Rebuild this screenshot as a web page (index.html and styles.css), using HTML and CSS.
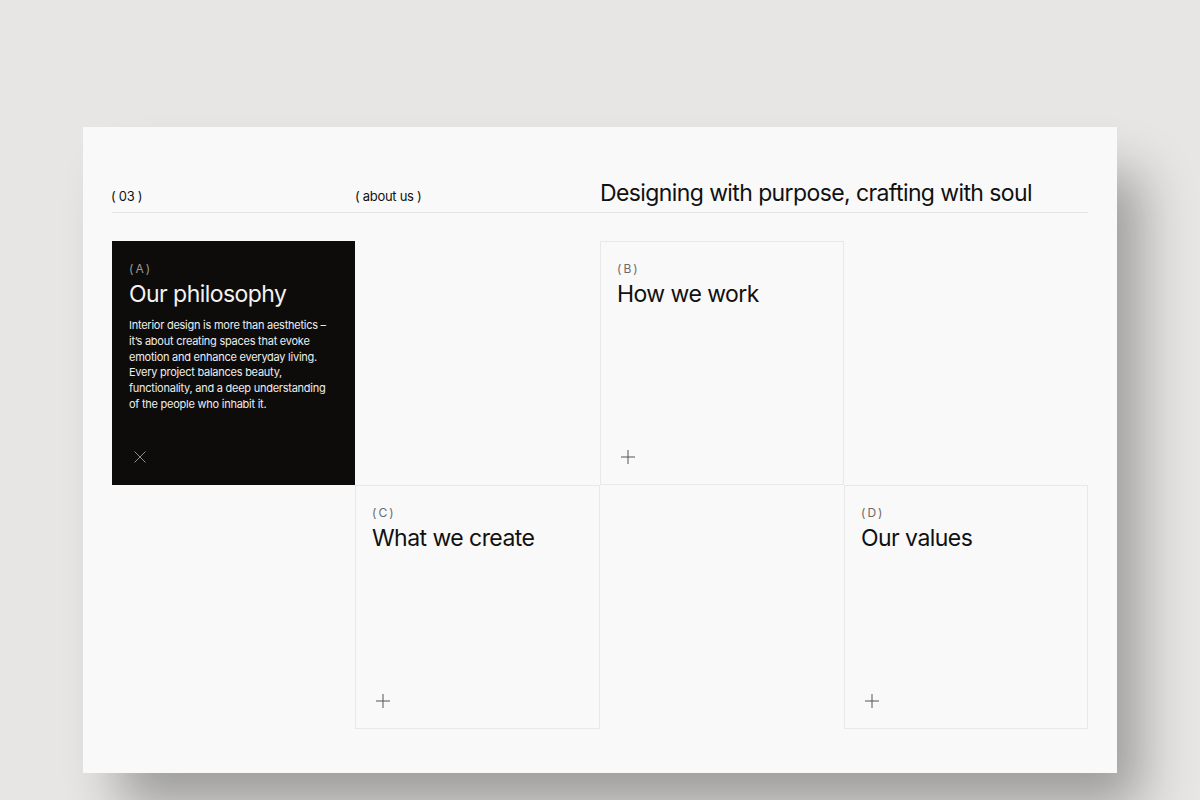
FILE: index.html
```html
<!DOCTYPE html>
<html lang="en">
<head>
<meta charset="utf-8">
<title>About us</title>
<link rel="stylesheet" href="styles.css">
</head>
<body>
<main class="frame">
  <header class="head">
    <span class="meta">( 03 )</span>
    <span class="meta">( about us )</span>
    <h1 class="headline">Designing with purpose, crafting with soul</h1>
  </header>
  <section class="grid">
    <article class="card card-dark">
      <span class="label">(A)</span>
      <h2 class="title">Our philosophy</h2>
      <p class="body">Interior design is more than aesthetics – it’s about creating spaces that evoke emotion and enhance everyday living. Every project balances beauty, functionality, and a deep understanding of the people who inhabit it.</p>
      <svg class="icon" viewBox="0 0 20 20" width="20" height="20"><path d="M4.5 4.5 L15.5 15.5 M15.5 4.5 L4.5 15.5" stroke="#8c8c8a" stroke-width="1" fill="none"/></svg>
    </article>
    <div class="empty"></div>
    <article class="card">
      <span class="label">(B)</span>
      <h2 class="title">How we work</h2>
      <svg class="icon" viewBox="0 0 20 20" width="20" height="20"><path d="M10 3 V17 M3 10 H17" stroke="#555" stroke-width="1" fill="none"/></svg>
    </article>
    <div class="empty"></div>
    <div class="empty"></div>
    <article class="card">
      <span class="label">(C)</span>
      <h2 class="title">What we create</h2>
      <svg class="icon" viewBox="0 0 20 20" width="20" height="20"><path d="M10 3 V17 M3 10 H17" stroke="#555" stroke-width="1" fill="none"/></svg>
    </article>
    <div class="empty"></div>
    <article class="card">
      <span class="label">(D)</span>
      <h2 class="title">Our values</h2>
      <svg class="icon" viewBox="0 0 20 20" width="20" height="20"><path d="M10 3 V17 M3 10 H17" stroke="#555" stroke-width="1" fill="none"/></svg>
    </article>
  </section>
</main>
</body>
</html>
```
FILE: styles.css
```css
* { box-sizing: border-box; }
html, body { margin: 0; padding: 0; }
body {
  width: 1200px;
  height: 800px;
  overflow: hidden;
  background: #e7e6e4;
  font-family: Inter, "Noto Sans", sans-serif;
  color: #111;
}
.frame {
  margin: 127px 0 0 83px;
  width: 1034px;
  height: 646px;
  background: #f9f9f9;
  padding: 0 29px;
  box-shadow: 30px 40px 50px -6px rgba(0,0,0,0.32);
}
.head {
  height: 86px;
  display: grid;
  grid-template-columns: 243px 245px 488px;
  align-items: baseline;
  align-content: end;
  padding-bottom: 6px;
  border-bottom: 1px solid #e4e4e2;
}
.meta {
  font-size: 13px;
  letter-spacing: -0.3px;
}
.meta:first-child { margin-left: -1px; }
.headline {
  margin: 0;
  font-size: 23px;
  font-weight: 400;
  letter-spacing: -0.6px;
  line-height: 26px;
}
.grid {
  margin-top: 28px;
  display: grid;
  grid-template-columns: 243px 245px 244px 244px;
  grid-template-rows: 244px 244px;
}
.card {
  display: flex;
  flex-direction: column;
  padding: 20px 17px 17px 16px;
  border: 1px solid #e9e8e4;
  background: #f9f9f9;
}
.card-dark {
  background: #0d0c0b;
  border-color: #0d0c0b;
  color: #f2f2f2;
}
.label {
  font-size: 12px;
  line-height: 14px;
  letter-spacing: 2px;
  color: #6a6a6a;
}
.card-dark .label { color: #9a9a98; }
.title {
  margin: 5px 0 0;
  font-size: 23px;
  font-weight: 400;
  line-height: 26px;
  letter-spacing: -0.55px;
}
.body {
  margin: 11px 0 0;
  font-size: 11px;
  line-height: 15.8px;
  letter-spacing: -0.25px;
  color: #eeeeee;
}
.icon {
  margin-top: auto;
  display: block;
  margin-left: 1px;
}
```
